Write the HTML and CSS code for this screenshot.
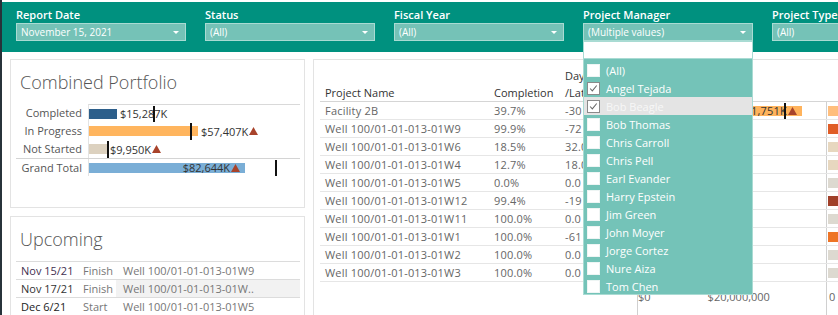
FILE: index.html
```html
<!DOCTYPE html>
<html lang="en">

<head>
    <meta charset="UTF-8">
    <meta name="viewport" content="width=device-width, initial-scale=1.0">
    <title>Project Portfolio Dashboard</title>

    <link rel="stylesheet" href="styles.css">
</head>

<body>
    <div class="app">
        <div class="edge"></div>
        <div class="main">
            <header class="filters">
                <div class="filter">
                    <div class="filter-label">Report Date</div>
                    <div class="select"><span>November 15, 2021</span><i class="caret"></i></div>
                </div>
                <div class="filter">
                    <div class="filter-label">Status</div>
                    <div class="select"><span>(All)</span><i class="caret"></i></div>
                </div>
                <div class="filter">
                    <div class="filter-label">Fiscal Year</div>
                    <div class="select"><span>(All)</span><i class="caret"></i></div>
                </div>
                <div class="filter">
                    <div class="filter-label">Project Manager</div>
                    <div class="select"><span>(Multiple values)</span><i class="caret"></i></div>
                </div>
                <div class="filter">
                    <div class="filter-label">Project Type</div>
                    <div class="select"><span>(All)</span><i class="caret"></i></div>
                </div>
            </header>

            <div class="content">
                <div class="side">
                    <section class="card portfolio">
                        <h2 class="card-title">Combined Portfolio</h2>
                        <div class="chart">
                            <div class="chart-row">
                                <div class="chart-label">Completed</div>
                                <div class="chart-plot first">
                                    <div class="bar completed" style="width: 28px"></div>
                                    <span class="val">$15,287K</span>
                                    <i class="target" style="left: 64px"></i>
                                </div>
                            </div>
                            <div class="chart-row">
                                <div class="chart-label">In Progress</div>
                                <div class="chart-plot">
                                    <div class="bar progress" style="width: 109px"></div>
                                    <span class="val">$57,407K<svg class="up" viewBox="0 0 9 8"><path d="M4.5 0L9 8H0z"/></svg></span>
                                    <i class="target" style="left: 101px"></i>
                                </div>
                            </div>
                            <div class="chart-row">
                                <div class="chart-label">Not Started</div>
                                <div class="chart-plot">
                                    <div class="bar notstarted" style="width: 18px"></div>
                                    <span class="val">$9,950K<svg class="up" viewBox="0 0 9 8"><path d="M4.5 0L9 8H0z"/></svg></span>
                                    <i class="target" style="left: 18px"></i>
                                </div>
                            </div>
                            <div class="chart-row total">
                                <div class="chart-label">Grand Total</div>
                                <div class="chart-plot">
                                    <div class="bar grand" style="width: 156px">
                                        <span class="val inside">$82,644K<svg class="up" viewBox="0 0 9 8"><path d="M4.5 0L9 8H0z"/></svg></span>
                                    </div>
                                    <i class="target" style="left: 186px"></i>
                                </div>
                            </div>
                        </div>
                    </section>

                    <section class="card upcoming">
                        <h2 class="card-title">Upcoming</h2>
                        <div class="up-table">
                            <div class="up-row">
                                <span class="up-date first">Nov 15/21</span>
                                <span class="up-type">Finish</span>
                                <span class="up-name">Well 100/01-01-013-01W9</span>
                            </div>
                            <div class="up-row hl">
                                <span class="up-date">Nov 17/21</span>
                                <span class="up-type">Finish</span>
                                <span class="up-name">Well 100/01-01-013-01W..</span>
                            </div>
                            <div class="up-row">
                                <span class="up-date dark">Dec 6/21</span>
                                <span class="up-type">Start</span>
                                <span class="up-name">Well 100/01-01-013-01W5</span>
                            </div>
                        </div>
                    </section>
                </div>

                <section class="panel">
                    <div class="ptable">
                        <div class="phead">
                            <span class="c-name">Project Name</span>
                            <span class="c-comp">Completion</span>
                            <span class="c-day">Days<br>/Late</span>
                        </div>
                        <div class="prow">
                            <span class="c-name">Facility 2B</span>
                            <span class="c-comp">39.7%</span>
                            <span class="c-day">-30</span>
                            <span class="c-bar">
                                <span class="pbar" style="width: 165px">$21,751K<svg class="up" viewBox="0 0 9 8"><path d="M4.5 0L9 8H0z"/></svg></span>
                                <i class="target" style="left: 147px"></i>
                            </span>
                            <span class="c-next"><i class="mini" style="background: #ffbe7d"></i></span>
                        </div>
                        <div class="prow">
                            <span class="c-name">Well 100/01-01-013-01W9</span>
                            <span class="c-comp">99.9%</span>
                            <span class="c-day">-72</span>
                            <span class="c-bar"></span>
                            <span class="c-next"><i class="mini" style="background: #e05d27"></i></span>
                        </div>
                        <div class="prow">
                            <span class="c-name">Well 100/01-01-013-01W6</span>
                            <span class="c-comp">18.5%</span>
                            <span class="c-day">32.0</span>
                            <span class="c-bar"></span>
                            <span class="c-next"><i class="mini" style="background: #e7d7bf"></i></span>
                        </div>
                        <div class="prow">
                            <span class="c-name">Well 100/01-01-013-01W4</span>
                            <span class="c-comp">12.7%</span>
                            <span class="c-day">18.0</span>
                            <span class="c-bar"></span>
                            <span class="c-next"><i class="mini" style="background: #e7d7bf"></i></span>
                        </div>
                        <div class="prow">
                            <span class="c-name">Well 100/01-01-013-01W5</span>
                            <span class="c-comp">0.0%</span>
                            <span class="c-day">0.0</span>
                            <span class="c-bar"></span>
                            <span class="c-next"><i class="mini" style="background: #ddd9d0"></i></span>
                        </div>
                        <div class="prow">
                            <span class="c-name">Well 100/01-01-013-01W12</span>
                            <span class="c-comp">99.4%</span>
                            <span class="c-day">-19</span>
                            <span class="c-bar"></span>
                            <span class="c-next"><i class="mini" style="background: #a1402a"></i></span>
                        </div>
                        <div class="prow">
                            <span class="c-name">Well 100/01-01-013-01W11</span>
                            <span class="c-comp">100.0%</span>
                            <span class="c-day">0.0</span>
                            <span class="c-bar"></span>
                            <span class="c-next"><i class="mini" style="background: #ddd9d0"></i></span>
                        </div>
                        <div class="prow">
                            <span class="c-name">Well 100/01-01-013-01W1</span>
                            <span class="c-comp">100.0%</span>
                            <span class="c-day">-61</span>
                            <span class="c-bar"></span>
                            <span class="c-next"><i class="mini" style="background: #ee7426"></i></span>
                        </div>
                        <div class="prow">
                            <span class="c-name">Well 100/01-01-013-01W2</span>
                            <span class="c-comp">100.0%</span>
                            <span class="c-day">0.0</span>
                            <span class="c-bar"></span>
                            <span class="c-next"><i class="mini" style="background: #ddd9d0"></i></span>
                        </div>
                        <div class="prow">
                            <span class="c-name">Well 100/01-01-013-01W3</span>
                            <span class="c-comp">100.0%</span>
                            <span class="c-day">0.0</span>
                            <span class="c-bar"></span>
                            <span class="c-next"><i class="mini" style="background: #ddd9d0"></i></span>
                        </div>
                        <div class="paxis">
                            <span class="axis-spacer"></span>
                            <span class="c-bar axis"><span>$0</span><span class="tick-20m">$20,000,000</span></span>
                            <span class="c-next axis">0</span>
                        </div>
                    </div>
                </section>
            </div>
        </div>
    </div>

    <!-- open Project Manager dropdown -->
    <div class="pm-dropdown">
        <div class="pm-search"></div>
        <ul class="pm-list">
            <li class="pm-item"><i class="box"></i>(All)</li>
            <li class="pm-item"><i class="box on"><svg viewBox="0 0 13 13"><path d="M2.5 6.5l2.6 2.8 5.2-6.3"/></svg></i>Angel Tejada</li>
            <li class="pm-item hover"><i class="box on"><svg viewBox="0 0 13 13"><path d="M2.5 6.5l2.6 2.8 5.2-6.3"/></svg></i>Bob Beagle</li>
            <li class="pm-item"><i class="box"></i>Bob Thomas</li>
            <li class="pm-item"><i class="box"></i>Chris Carroll</li>
            <li class="pm-item"><i class="box"></i>Chris Pell</li>
            <li class="pm-item"><i class="box"></i>Earl Evander</li>
            <li class="pm-item"><i class="box"></i>Harry Epstein</li>
            <li class="pm-item"><i class="box"></i>Jim Green</li>
            <li class="pm-item"><i class="box"></i>John Moyer</li>
            <li class="pm-item"><i class="box"></i>Jorge Cortez</li>
            <li class="pm-item"><i class="box"></i>Nure Aiza</li>
            <li class="pm-item"><i class="box"></i>Tom Chen</li>
        </ul>
    </div>
</body>

</html>
```

FILE: styles.css
```css
* {
    box-sizing: border-box;
}

body {
    margin: 0;
    width: 838px;
    height: 315px;
    overflow: hidden;
    position: relative;
    background: #fff;
    font-family: "Open Sans", "Noto Sans", sans-serif;
}

.app {
    display: flex;
    height: 315px;
}

.edge {
    flex: none;
    width: 2px;
    background: #27323a;
}

.main {
    flex: 1;
    min-width: 0;
    padding-top: 2px;
    overflow: hidden;
}

/* filter bar */
.filters {
    display: flex;
    gap: 19px;
    height: 50px;
    padding: 6px 0 0 14px;
    background: #00917f;
}

.filter {
    flex: none;
    width: 170px;
}

.filter-label {
    color: #fff;
    font-size: 11px;
    font-weight: 600;
    line-height: 14px;
    margin-bottom: 1px;
}

.select {
    display: flex;
    align-items: center;
    height: 18px;
    padding: 0 6px 0 4px;
    border: 1px solid #a9dbd3;
    background: #75c2b7;
    color: #fff;
    font-size: 10px;
}

.caret {
    margin-left: auto;
    border-left: 3px solid transparent;
    border-right: 3px solid transparent;
    border-top: 3px solid #fff;
}

/* content */
.content {
    display: flex;
    gap: 8px;
    padding: 7px 0 0 8px;
}

.side {
    flex: none;
    width: 295px;
    display: flex;
    flex-direction: column;
    gap: 8px;
}

.card {
    border: 1px solid #e3e3e3;
    padding: 10px 4px 0 5px;
}

.portfolio {
    height: 149px;
}

.upcoming {
    height: 130px;
}

.card-title {
    margin: 0 0 10px 4px;
    font-size: 18px;
    font-weight: 300;
    line-height: 24px;
    color: #555;
}

/* bar chart */
.chart-row {
    display: flex;
    height: 18px;
}

.chart-row.total {
    border-top: 1px solid #d4d4d4;
}

.chart-label {
    width: 72px;
    padding-right: 6px;
    text-align: right;
    font-size: 11px;
    line-height: 17px;
    color: #555;
}

.chart-plot {
    flex: 1;
    position: relative;
    display: flex;
    align-items: center;
    border-left: 1px solid #e3e3e3;
}

.chart-plot.first {
    border-top: 1px solid #d9d9d9;
}

.bar {
    flex: none;
    height: 10px;
}

.completed { background: #2d5f8b; }
.progress { background: #ffb55e; }
.notstarted { background: #dcd1bf; }

.grand {
    display: flex;
    align-items: center;
    justify-content: flex-end;
    padding-right: 5px;
    background: #7aaed6;
}

.val {
    display: flex;
    align-items: center;
    gap: 1px;
    margin-left: 3px;
    font-size: 11px;
    color: #333;
    white-space: nowrap;
}

.val.inside {
    margin-left: 0;
}

.up {
    width: 9px;
    height: 8px;
    fill: #a8432b;
}

.target {
    position: absolute;
    top: 1px;
    bottom: 0;
    width: 2px;
    background: #111;
}

/* upcoming list */
.up-table {
    border-top: 1px solid #dcdcdc;
}

.up-row {
    display: flex;
    height: 18px;
    border-bottom: 1px solid #dcdcdc;
    font-size: 11px;
    line-height: 17px;
    color: #777;
}

.up-date {
    width: 62px;
    padding-left: 5px;
    color: #333;
}

.up-date.first { color: #43304f; }
.up-date.dark { color: #222; }

.up-type {
    width: 38px;
    padding-left: 5px;
}

.up-name {
    flex: 1;
    padding-left: 7px;
    white-space: nowrap;
}

.up-row.hl .up-name {
    background: #f2f2f2;
}

/* project table */
.panel {
    flex: none;
    width: 540px;
    height: 260px;
    border-left: 1px solid #e3e3e3;
    border-top: 1px solid #e3e3e3;
}

.ptable {
    margin-left: 6px;
}

.phead {
    display: flex;
    align-items: flex-end;
    height: 42px;
    border-bottom: 1px solid #d5d5d5;
    font-size: 11px;
    line-height: 17px;
    color: #333;
}

.prow {
    display: flex;
    height: 18px;
    border-bottom: 1px solid #e6e6e6;
    font-size: 11px;
    line-height: 17px;
    color: #666;
    letter-spacing: 0.2px;
}

.c-name {
    flex: none;
    width: 169px;
    padding-left: 5px;
    white-space: nowrap;
}

.c-comp {
    flex: none;
    width: 71px;
    padding-left: 5px;
}

.c-day {
    flex: none;
    width: 77px;
    padding-left: 5px;
    white-space: nowrap;
}

.c-bar {
    flex: none;
    position: relative;
    width: 189px;
    display: flex;
    align-items: center;
}

.pbar {
    display: flex;
    align-items: center;
    justify-content: flex-end;
    gap: 1px;
    height: 10px;
    padding-right: 5px;
    background: #ffb35c;
    color: #333;
    white-space: nowrap;
}

.c-next {
    flex: 1;
    display: flex;
    align-items: center;
    padding-left: 1px;
    border-left: 1px solid #d0d0d0;
}

.mini {
    width: 20px;
    height: 10px;
}

.paxis {
    display: flex;
    height: 40px;
    font-size: 11px;
    color: #666;
}

.axis-spacer {
    width: 317px;
}

.c-bar.axis {
    align-items: flex-start;
    padding-top: 7px;
    border-left: 1px solid #d0d0d0;
}

.c-next.axis {
    align-items: flex-start;
    padding: 7px 0 0 2px;
}

.tick-20m {
    margin-left: 57px;
}

/* Project Manager dropdown (open) */
.pm-dropdown {
    position: absolute;
    left: 583px;
    top: 41px;
    width: 170px;
    z-index: 5;
}

.pm-search {
    height: 18px;
    background: #fff;
    border: 1px solid #a9dbd3;
}

.pm-list {
    list-style: none;
    margin: 0;
    padding: 2px 0 0;
    height: 236px;
    background: #74c3b8;
    border: 1px solid #a9dbd3;
    border-top: 0;
}

.pm-item {
    display: flex;
    align-items: center;
    gap: 6px;
    height: 18px;
    padding-left: 3px;
    color: #fff;
    font-size: 11px;
}

.pm-item.hover {
    background: #e4e4e4;
    color: #f7f7f7;
}

.box {
    flex: none;
    width: 13px;
    height: 13px;
    background: #fff;
    border: 1px solid #eef5f4;
}

.box.on {
    border-color: #8a8a8a;
}

.box svg {
    display: block;
    width: 11px;
    height: 11px;
    fill: none;
    stroke: #666;
    stroke-width: 1.2;
}
```
